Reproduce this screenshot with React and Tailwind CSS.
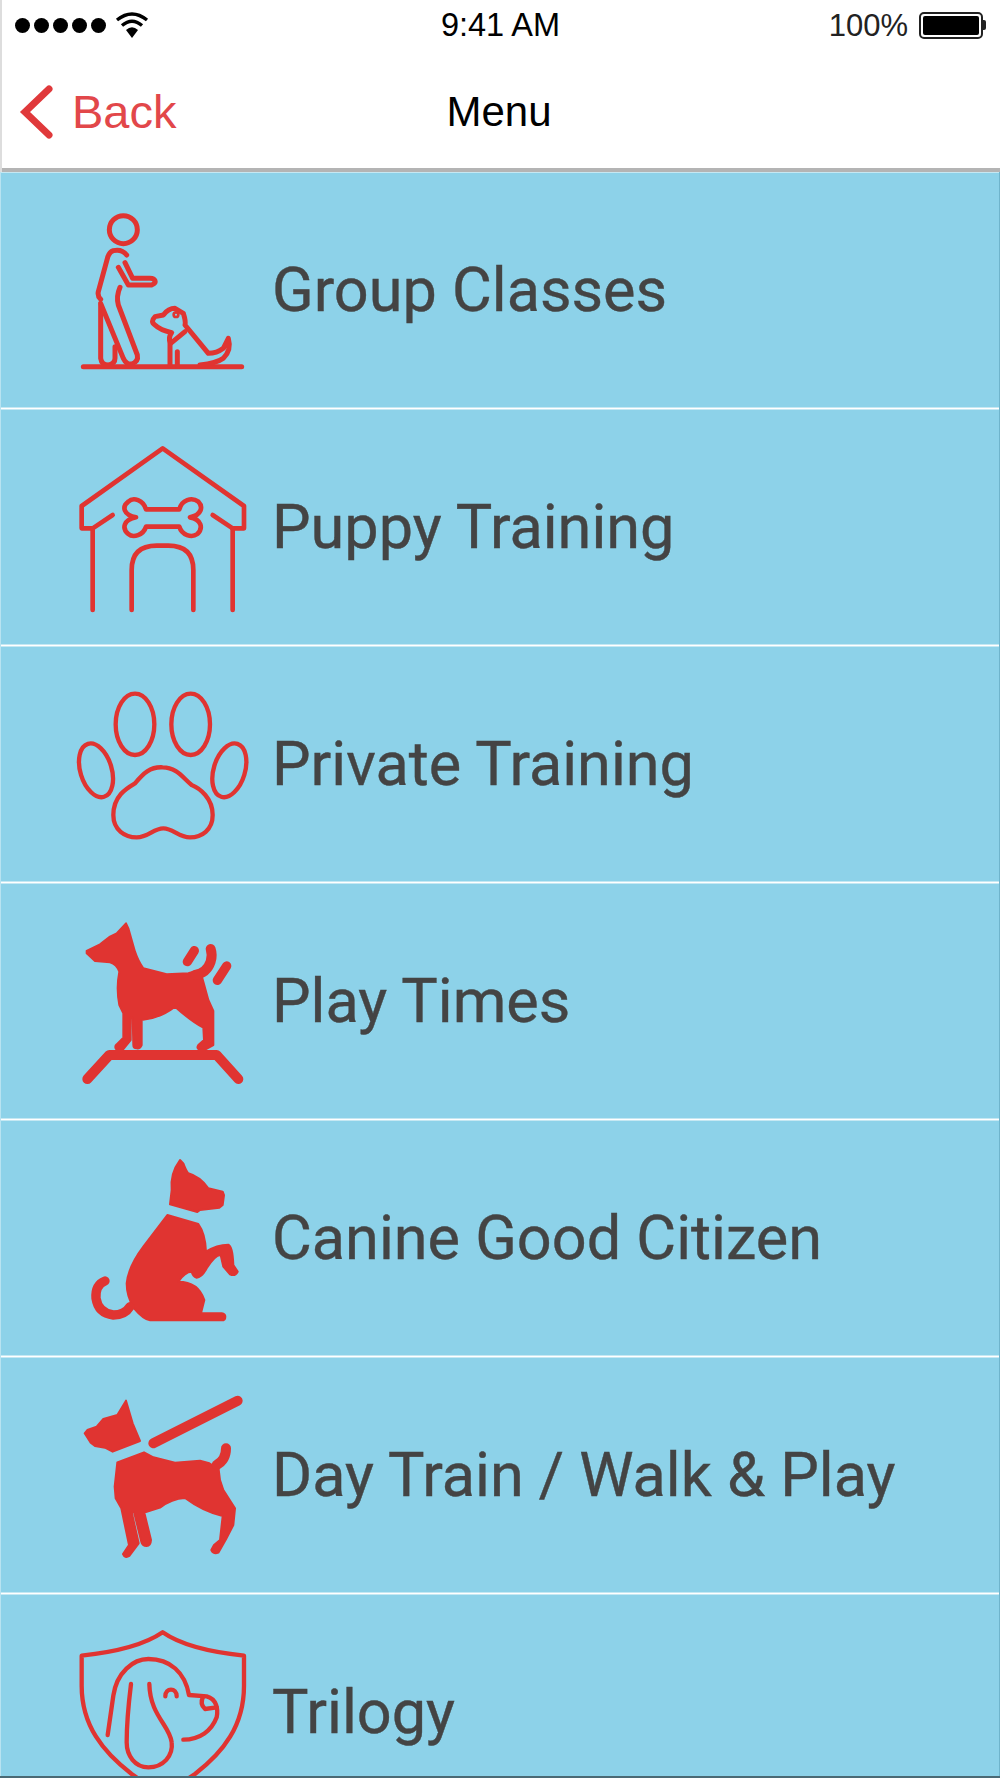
const RED = "#e03431";

const Icon = ({ top, children }) => (
  <svg width="212" height="200" viewBox={`0 ${top} 636 600`} className="shrink-0 overflow-visible">
    {children}
  </svg>
);

const lineProps = { fill: "none", stroke: RED, strokeLinecap: "round", strokeLinejoin: "round" };
const solidProps = { fill: RED, stroke: RED, strokeWidth: 6, strokeLinejoin: "round" };

const TrainerIcon = () => (
  <Icon top={0}>
    <g {...lineProps} strokeWidth="15">
      <circle cx="190" cy="119" r="42" />
      <path d="M200 195Q185 176 160 182Q148 186 143 202L115 305Q112 318 122 328" />
      <path d="M122 345L122 505Q125 525 145 525Q165 522 165 505L165 470" />
      <path d="M180 292Q168 320 175 345L232 495Q236 515 215 522Q200 525 190 505L122 340" />
      <path d="M175 232L205 285L275 285Q288 280 285 272Q282 265 270 265L218 265L195 218" />
      <path d="M70 530L545 530" />
      <path d="M330 525L330 460Q325 440 335 428Q300 420 285 405Q270 395 285 380L310 375Q325 355 345 355L370 370Q378 395 375 405L445 490Q470 490 490 475L505 445Q515 480 490 505Q470 520 420 525" />
      <path d="M332 460L375 425" />
      <path d="M352 485L352 525" />
      <circle cx="348" cy="374" r="7" strokeWidth="8" />
    </g>
  </Icon>
);

const HouseIcon = () => (
  <Icon top={-9}>
    <g {...lineProps} strokeWidth="14">
      <path d="M98 295L65 295L65 228L308 55L552 228L552 295L518 295" />
      <path d="M98 295L158 255M458 255L518 295" />
      <path d="M98 295L98 540M518 295L518 540" />
      <path d="M215 540L215 420Q215 347 290 347L325 347Q400 347 400 420L400 540" />
      <path d="M258 238L358 238C365 210 395 200 415 215C430 230 425 255 390 262C425 268 430 295 412 312C395 325 365 315 358 290L258 290C250 315 220 325 205 312C185 295 190 270 228 262C190 255 185 230 205 215C220 200 250 210 258 238Z" />
    </g>
  </Icon>
);

const PawIcon = () => (
  <Icon top={-18}>
    <g {...lineProps} strokeWidth="13">
      <ellipse cx="225" cy="163" rx="58" ry="92" />
      <ellipse cx="392" cy="163" rx="58" ry="92" />
      <ellipse cx="108" cy="301" rx="47" ry="83" transform="rotate(-17 108 301)" />
      <ellipse cx="508" cy="301" rx="47" ry="83" transform="rotate(17 508 301)" />
      <path d="M308 292C270 290 250 310 225 340C205 352 160 375 160 435C160 480 195 502 230 502C265 502 280 475 310 475C340 475 355 502 390 502C425 502 458 480 458 435C458 385 420 355 395 345C370 325 350 292 308 292Z" />
    </g>
  </Icon>
);

const PlayIcon = () => (
  <Icon top={-12}>
    <path
      {...solidProps}
      d="M80 138L120 118L150 95L170 85L198 55L205 70L225 140Q235 170 250 190L320 208L385 205L420 195L430 230L445 285L460 318L460 420L438 432L420 435Q408 430 415 420L432 405L430 368Q395 350 345 305Q300 340 245 345L245 420Q240 432 230 430Q220 430 220 420L218 338L212 338L212 405L190 432L170 435Q162 425 170 418L190 398L190 325L178 300Q168 250 178 200Q170 178 150 172L105 168L80 145Z"
    />
    <g {...lineProps}>
      <path d="M405 210Q440 205 452 170Q458 150 452 132" strokeWidth="30" />
      <path d="M382 170L403 137M472 226L500 183" strokeWidth="28" />
      <path d="M82 522L148 450L470 450L535 522" strokeWidth="30" />
    </g>
  </Icon>
);

const SitIcon = () => (
  <Icon top={-6}>
    <path
      {...solidProps}
      d="M360 60L370 70Q378 92 385 100Q420 110 445 145L488 155L492 165L488 195L478 203L420 210L412 216L330 193L335 150Q330 100 360 60Z"
    />
    <path
      {...solidProps}
      d="M322 225L415 252Q436 280 438 335Q470 314 505 314Q518 318 520 375L533 395Q525 410 510 403L490 380L482 345Q465 345 440 385Q425 413 410 413Q398 410 395 395Q375 395 355 425Q415 425 433 480L423 520L485 520Q496 522 496 530Q496 541 485 541L270 541Q250 538 222 505Q200 470 200 430Q205 380 250 320Z"
    />
    <path {...lineProps} strokeWidth="28" d="M135 423Q105 435 108 475Q115 520 160 525Q195 525 210 500" />
  </Icon>
);

const LeashIcon = () => (
  <Icon top={-15}>
    <path
      {...solidProps}
      d="M198 62L218 130L240 183L158 215L135 203L105 198L92 188L74 160L82 150L110 140L130 117L172 105Z"
    />
    <path
      {...solidProps}
      d="M172 247L252 217L280 232L345 248L420 242L448 250L476 268L480 300L490 330L525 385L520 435L498 478L475 518Q460 523 454 510L462 495L480 480L488 408Q430 395 375 354Q335 356 300 383L253 398L273 480Q272 498 260 498Q247 498 244 485L222 396L215 396L236 490L208 528Q195 536 189 522L207 495L184 385L167 355L164 320Z"
    />
    <path {...lineProps} strokeWidth="30" d="M280 190L533 62" />
    <path {...lineProps} strokeWidth="30" d="M470 255Q498 240 498 205" />
  </Icon>
);

const ShieldIcon = () => (
  <Icon top={9}>
    <g {...lineProps} strokeWidth="13">
      <path d="M308 560L215 495C130 430 65 350 65 230L65 140C160 130 250 110 308 70C365 110 455 130 552 140L552 230C552 350 490 430 405 495L308 560" />
      <path d="M143 378L160 260C170 190 220 150 265 150C330 150 375 190 387 258L440 262C470 270 475 300 470 325C455 365 420 392 370 392" />
      <path d="M430 262Q418 285 435 300L470 295" />
      <path d="M213 225C205 290 200 340 200 400C200 440 225 475 265 475C310 475 340 440 335 400C330 350 270 320 268 225" />
      <path d="M316 262C316 235 350 235 350 262" />
    </g>
  </Icon>
);

const rows = [
  ["Group Classes", TrainerIcon],
  ["Puppy Training", HouseIcon],
  ["Private Training", PawIcon],
  ["Play Times", PlayIcon],
  ["Canine Good Citizen", SitIcon],
  ["Day Train / Walk & Play", LeashIcon],
  ["Trilogy", ShieldIcon],
];

const Signal = () => (
  <div className="flex items-center gap-[4px]">
    {[0, 1, 2, 3, 4].map((i) => (
      <span key={i} className="block h-[15px] w-[15px] rounded-full bg-black" />
    ))}
  </div>
);

const Wifi = () => (
  <svg width="34" height="28" viewBox="0 0 34 28" className="ml-[9px]">
    <g fill="none" stroke="#000" strokeWidth="3.4">
      <path d="M2 9Q17 -3 32 9" />
      <path d="M7 14.500Q17 6 27 14.500" />
    </g>
    <path d="M11 19Q17 13.500 23 19L17 27Z" fill="#000" />
  </svg>
);

const Battery = () => (
  <div className="flex items-center">
    <div className="h-[27px] w-[64px] rounded-[5px] border-2 border-[#222] p-[2px]">
      <div className="h-full w-full rounded-[2px] bg-black" />
    </div>
    <div className="h-[10px] w-[3px] rounded-r-[2px] bg-[#222]" />
  </div>
);

export default function App() {
  return (
    <div className="h-[1778px] w-[1000px] overflow-hidden border-b-2 border-[#4a6a75] bg-white font-['Liberation_Sans',sans-serif]">
      <header className="h-[172px] border-l-2 border-[#dddddd]">
        <div className="flex h-[50px] items-center justify-between pl-[13px] pr-[14px]">
          <div className="flex w-[300px] items-center">
            <Signal />
            <Wifi />
          </div>
          <span className="text-[32.500px] leading-none text-black">9:41 AM</span>
          <div className="flex w-[300px] items-center justify-end gap-[11px]">
            <span className="text-[31px] leading-none text-[#222]">100%</span>
            <Battery />
          </div>
        </div>
        <div className="grid h-[122px] grid-cols-3 items-center border-b-4 border-[#b4b4b4] pt-[5px]">
          <div className="flex items-center gap-[19px] pl-[17px]">
            <svg width="34" height="54" viewBox="0 0 34 54">
              <path d="M30 4L6 27L30 50" fill="none" stroke="#e0393b" strokeWidth="7" strokeLinecap="round" strokeLinejoin="miter" />
            </svg>
            <span className="text-[47px] leading-none text-[#e2474a]">Back</span>
          </div>
          <div className="pr-[4px] text-center text-[42px] leading-none text-black">Menu</div>
          <div />
        </div>
      </header>
      <main className="flex flex-col gap-[1px] border-r border-l border-r-[#6fb4cc] border-l-[#b8e3f1] bg-white font-['Roboto',sans-serif]">
        {rows.map(([label, Ic]) => (
          <div key={label} className="flex h-[236px] shrink-0 items-center overflow-hidden border-y border-[#c5e8f3] bg-[#8dd2e9] pl-[59px]">
            <Ic />
            <span className="pt-[1px] text-[61.200px] leading-none whitespace-nowrap text-[#444444] [-webkit-text-stroke:0.4px_#444444]">{label}</span>
          </div>
        ))}
      </main>
    </div>
  );
}
